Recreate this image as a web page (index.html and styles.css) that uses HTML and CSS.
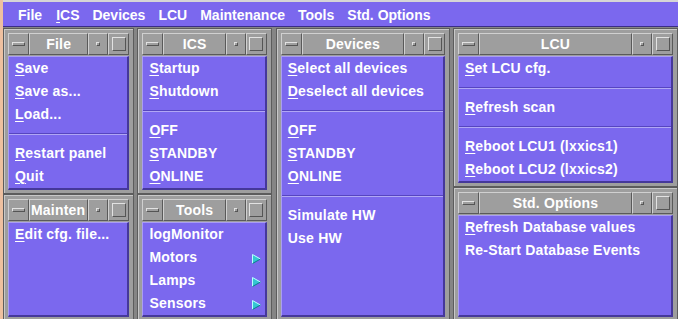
FILE: index.html
```html
<!DOCTYPE html>
<html lang="en">
<head>
    <meta charset="UTF-8">
    <title>ICS Control Panel</title>
    <link rel="stylesheet" href="styles.css">
</head>
<body>
<div class="screen">
    <div class="menubar">
        <span class="mb-item">File</span>
        <span class="mb-item"><u>I</u>CS</span>
        <span class="mb-item">Devices</span>
        <span class="mb-item">LCU</span>
        <span class="mb-item">Maintenance</span>
        <span class="mb-item">Tools</span>
        <span class="mb-item">Std. Options</span>
    </div>

    <div class="desktop">
        <!-- column 1 -->
        <div class="col col-1">
            <div class="win">
                <div class="titlebar">
                    <span class="tb-btn tb-min"><i></i></span>
                    <span class="tb-title"><span>File</span></span>
                    <span class="tb-btn tb-dot"><i></i></span>
                    <span class="tb-btn tb-max"><i></i></span>
                </div>
                <ul class="menu">
                    <li><u>S</u>ave</li>
                    <li><u>S</u>ave as...</li>
                    <li><u>L</u>oad...</li>
                    <li class="sep"></li>
                    <li><u>R</u>estart panel</li>
                    <li><u>Q</u>uit</li>
                </ul>
            </div>
            <div class="win fill">
                <div class="titlebar">
                    <span class="tb-btn tb-min"><i></i></span>
                    <span class="tb-title left"><span>Mainten</span></span>
                    <span class="tb-btn tb-dot"><i></i></span>
                    <span class="tb-btn tb-max"><i></i></span>
                </div>
                <ul class="menu">
                    <li><u>E</u>dit cfg. file...</li>
                </ul>
            </div>
        </div>

        <!-- column 2 -->
        <div class="col col-2">
            <div class="win">
                <div class="titlebar">
                    <span class="tb-btn tb-min"><i></i></span>
                    <span class="tb-title"><span>ICS</span></span>
                    <span class="tb-btn tb-dot"><i></i></span>
                    <span class="tb-btn tb-max"><i></i></span>
                </div>
                <ul class="menu">
                    <li><u>S</u>tartup</li>
                    <li><u>S</u>hutdown</li>
                    <li class="sep"></li>
                    <li><u>O</u>FF</li>
                    <li><u>S</u>TANDBY</li>
                    <li><u>O</u>NLINE</li>
                </ul>
            </div>
            <div class="win fill">
                <div class="titlebar">
                    <span class="tb-btn tb-min"><i></i></span>
                    <span class="tb-title"><span>Tools</span></span>
                    <span class="tb-btn tb-dot"><i></i></span>
                    <span class="tb-btn tb-max"><i></i></span>
                </div>
                <ul class="menu">
                    <li>logMonitor</li>
                    <li>Motors <svg class="cascade" width="9" height="10" viewBox="0 0 9 10"><polygon points="0.5,0.5 8.5,5 0.5,9.5" fill="#34c6d2"/><polyline points="0.5,9.5 0.5,0.5 8.5,5" fill="none" stroke="#b8ffff" stroke-width="1"/><line x1="0.5" y1="9.5" x2="8.5" y2="5" stroke="#0a7f8a" stroke-width="1"/></svg></li>
                    <li>Lamps <svg class="cascade" width="9" height="10" viewBox="0 0 9 10"><polygon points="0.5,0.5 8.5,5 0.5,9.5" fill="#34c6d2"/><polyline points="0.5,9.5 0.5,0.5 8.5,5" fill="none" stroke="#b8ffff" stroke-width="1"/><line x1="0.5" y1="9.5" x2="8.5" y2="5" stroke="#0a7f8a" stroke-width="1"/></svg></li>
                    <li>Sensors <svg class="cascade" width="9" height="10" viewBox="0 0 9 10"><polygon points="0.5,0.5 8.5,5 0.5,9.5" fill="#34c6d2"/><polyline points="0.5,9.5 0.5,0.5 8.5,5" fill="none" stroke="#b8ffff" stroke-width="1"/><line x1="0.5" y1="9.5" x2="8.5" y2="5" stroke="#0a7f8a" stroke-width="1"/></svg></li>
                </ul>
            </div>
        </div>

        <!-- column 3 -->
        <div class="col col-3">
            <div class="win fill">
                <div class="titlebar">
                    <span class="tb-btn tb-min"><i></i></span>
                    <span class="tb-title"><span>Devices</span></span>
                    <span class="tb-btn tb-dot"><i></i></span>
                    <span class="tb-btn tb-max"><i></i></span>
                </div>
                <ul class="menu">
                    <li><u>S</u>elect all devices</li>
                    <li><u>D</u>eselect all devices</li>
                    <li class="sep"></li>
                    <li><u>O</u>FF</li>
                    <li><u>S</u>TANDBY</li>
                    <li><u>O</u>NLINE</li>
                    <li class="sep"></li>
                    <li>Simulate HW</li>
                    <li>Use HW</li>
                </ul>
            </div>
        </div>

        <!-- column 4 -->
        <div class="col col-4">
            <div class="win">
                <div class="titlebar">
                    <span class="tb-btn tb-min"><i></i></span>
                    <span class="tb-title"><span>LCU</span></span>
                    <span class="tb-btn tb-dot"><i></i></span>
                    <span class="tb-btn tb-max"><i></i></span>
                </div>
                <ul class="menu">
                    <li><u>S</u>et LCU cfg.</li>
                    <li class="sep"></li>
                    <li><u>R</u>efresh scan</li>
                    <li class="sep"></li>
                    <li><u>R</u>eboot LCU1 (lxxics1)</li>
                    <li><u>R</u>eboot LCU2 (lxxics2)</li>
                </ul>
            </div>
            <div class="win fill">
                <div class="titlebar">
                    <span class="tb-btn tb-min"><i></i></span>
                    <span class="tb-title"><span>Std. Options</span></span>
                    <span class="tb-btn tb-dot"><i></i></span>
                    <span class="tb-btn tb-max"><i></i></span>
                </div>
                <ul class="menu">
                    <li><u>R</u>efresh Database values</li>
                    <li>Re-Start Database Events</li>
                </ul>
            </div>
        </div>
    </div>
</div>
</body>
</html>
```

FILE: styles.css
```css
* {
    margin: 0;
    padding: 0;
    box-sizing: border-box;
}

body {
    background-color: #eec0a0;
    font-family: "Liberation Sans", Arial, sans-serif;
    font-weight: bold;
    font-size: 14px;
    letter-spacing: 0.2px;
    color: white;
    overflow: hidden;
}

.screen {
    width: 675px;
    height: 319px;
    margin-left: 3px;
    overflow: hidden;
    background-color: #858585;
}

u {
    text-decoration: underline;
    text-decoration-thickness: 1px;
    text-underline-offset: 2px;
}

/* top menu bar */
.menubar {
    display: flex;
    gap: 13px;
    height: 27px;
    padding: 3px 0 1px 15px;
    line-height: 20px;
    letter-spacing: 0;
    background-color: #7b68ee;
    border-top: 2px solid #d6d6d6;
    border-bottom: 1px solid #3a2d86;
}

.mb-item:nth-child(2) {
    margin-left: 1px;
}

/* desktop with tear-off windows */
.desktop {
    display: flex;
    padding-top: 1px;
    height: 294px;
}

.col {
    display: flex;
    flex-direction: column;
    height: 293px;
}

.col-1 { width: 132px; margin-right: 3px; }
.col-2 { width: 135px; margin-right: 4px; }
.col-3 { width: 175px; margin-right: 3px; }
.col-4 { width: 226px; }

.win {
    position: relative;
    background-color: #9e9e9e;
    border: 1px solid #5c5c5c;
    box-shadow: inset 1px 1px 0 #c8c8c8;
    padding: 4px 4px 3px 4px;
}

/* resize-handle ticks on the frame */
.win::before {
    content: "";
    position: absolute;
    inset: 0;
    pointer-events: none;
    background:
        linear-gradient(90deg, #5c5c5c 1px, #cacaca 1px) 23px 0 / 2px 4px no-repeat,
        linear-gradient(90deg, #5c5c5c 1px, #cacaca 1px) right 24px top 0 / 2px 4px no-repeat,
        linear-gradient(90deg, #5c5c5c 1px, #cacaca 1px) 23px bottom / 2px 3px no-repeat,
        linear-gradient(90deg, #5c5c5c 1px, #cacaca 1px) right 24px bottom 0 / 2px 3px no-repeat,
        linear-gradient(#5c5c5c 1px, #cacaca 1px) 0 26px / 4px 2px no-repeat,
        linear-gradient(#5c5c5c 1px, #cacaca 1px) right 0 top 26px / 4px 2px no-repeat,
        linear-gradient(#5c5c5c 1px, #cacaca 1px) 0 bottom 24px / 4px 2px no-repeat,
        linear-gradient(#5c5c5c 1px, #cacaca 1px) right 0 bottom 24px / 4px 2px no-repeat;
}

.win.fill {
    flex: 1;
    display: flex;
    flex-direction: column;
}

.titlebar {
    display: flex;
    height: 22px;
    margin-bottom: 1px;
}

.tb-btn,
.tb-title {
    background-color: #9e9e9e;
    border: 1px solid;
    border-color: #d0d0d0 #5a5a5a #5a5a5a #d0d0d0;
}

.tb-btn {
    display: flex;
    align-items: center;
    justify-content: center;
    flex: none;
}

.tb-min { width: 21px; }
.tb-dot { width: 20px; }
.tb-max { width: 21px; }

.tb-min i {
    display: block;
    width: 13px;
    height: 4px;
    border: 1px solid;
    border-color: #e2e2e2 #555 #555 #e2e2e2;
}

.tb-dot i {
    display: block;
    width: 4px;
    height: 4px;
    border: 1px solid;
    border-color: #e2e2e2 #555 #555 #e2e2e2;
}

.tb-max i {
    display: block;
    width: 14px;
    height: 14px;
    border: 1px solid;
    border-color: #e2e2e2 #555 #555 #e2e2e2;
}

.tb-title {
    flex: 1;
    display: flex;
    overflow: hidden;
    line-height: 20px;
    white-space: nowrap;
    padding: 0 1px;
}

.tb-title span {
    margin: 0 auto;
}

.tb-title.left span {
    margin: 0;
}

/* purple menu panes */
.menu {
    list-style: none;
    background-color: #7b68ee;
    border: 2px solid;
    border-color: #a99df4 #45389a #45389a #a99df4;
    border-top-width: 1px;
    border-left-width: 1px;
}

.win.fill .menu {
    flex: 1;
}

.menu li {
    display: flex;
    align-items: center;
    height: 23px;
    line-height: 23px;
    padding-left: 6px;
    white-space: nowrap;
}

.menu li.sep {
    height: 0;
    margin: 7px 0;
    border-top: 1px solid #5645c0;
    border-bottom: 1px solid #b1a7f5;
}

.cascade {
    margin-left: auto;
    margin-right: 4px;
    margin-top: 3px;
}
```
